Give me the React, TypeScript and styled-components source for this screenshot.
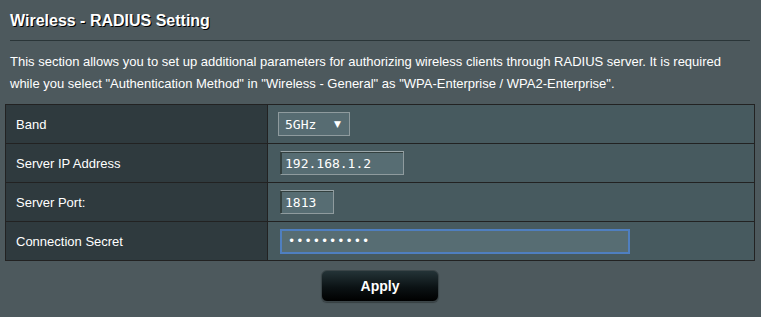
import React from 'react'
import styled, { createGlobalStyle } from 'styled-components'

const GlobalStyle = createGlobalStyle`
  body {
    margin: 0;
    background: #4d595d;
    font-family: "Liberation Sans", Arial, sans-serif;
    color: #fff;
  }
`

const Page = styled.div`
  width: 761px;
  height: 317px;
  padding: 0 6px 0 5px;
  box-sizing: border-box;
  background: #4d595d;
`

const Title = styled.h2`
  margin: 0 0 0 5px;
  padding-top: 11px;
  height: 40px;
  box-sizing: border-box;
  font-size: 16px;
  font-weight: bold;
  line-height: 20px;
  text-shadow: 1px 1px 0 #000;
`

const Divider = styled.div`
  margin: 0 0 0 5px;
  width: 740px;
  height: 1px;
  background: #2a3538;
`

const Description = styled.p`
  margin: 10px 0 0 5px;
  width: 740px;
  font-size: 13px;
  line-height: 22px;
  height: 53px;
`

const Table = styled.table`
  width: 750px;
  border-collapse: collapse;
  border: 1px solid #222;
`

const Row = styled.tr`
  height: 39px;
`

const Label = styled.th`
  width: 251px;
  background: #2f3a3e;
  border: 1px solid #222;
  text-align: left;
  font-weight: normal;
  font-size: 13px;
  padding: 0 0 0 10px;
`

const Cell = styled.td<{ $indent?: number }>`
  background: #475a5f;
  border: 1px solid #222;
  padding: 0 0 0 ${(p) => p.$indent ?? 12}px;
`

const Select = styled.div`
  width: 72px;
  height: 24px;
  box-sizing: border-box;
  border: 1px solid #8f9b9e;
  background: #576c72;
  display: flex;
  align-items: center;
  justify-content: space-between;
  padding: 0 8px 0 6px;
  font-family: "DejaVu Sans Mono", monospace;
  font-size: 13px;
`

const Arrow = styled.span`
  font-size: 9px;
  font-family: "DejaVu Sans", sans-serif;
`

const Input = styled.input<{ $width: number; $focus?: boolean }>`
  width: ${(p) => p.$width}px;
  height: ${(p) => (p.$focus ? 25 : 24)}px;
  box-sizing: border-box;
  margin: 0;
  display: block;
  background: #576d73;
  color: #fff;
  font-family: "DejaVu Sans Mono", monospace;
  font-size: 13px;
  padding: 0 0 0 4px;
  outline: none;
  border: 1px solid #8f9b9e;
  border-left-color: #33403f;
  border-top-color: #9aa6a9;
  box-shadow: inset 1px 1px 0 #33403f;
  ${(p) =>
    p.$focus &&
    `
    border: 2px solid #4f7fc0;
    box-shadow: none;
    padding-left: 6px;
    font-size: 12px;
    letter-spacing: 1px;
  `}
`

const Footer = styled.div`
  display: flex;
  justify-content: center;
  padding-top: 9px;
`

const ApplyButton = styled.button`
  width: 118px;
  height: 32px;
  border-radius: 6px;
  border: 1px solid #3b4548;
  background: linear-gradient(to bottom, #243337 0%, #0b1214 55%, #000 100%);
  color: #fff;
  font-family: "Liberation Sans", Arial, sans-serif;
  font-weight: bold;
  font-size: 14px;
  box-shadow: 0 1px 1px rgba(0, 0, 0, 0.3);
`

export default function App() {
  return (
    <Page>
      <GlobalStyle />
      <Title>Wireless - RADIUS Setting</Title>
      <Divider />
      <Description>
        This section allows you to set up additional parameters for authorizing wireless clients through RADIUS
        server. It is required while you select "Authentication Method" in "Wireless - General" as
        "WPA-Enterprise / WPA2-Enterprise".
      </Description>
      <Table>
        <tbody>
          <Row>
            <Label>Band</Label>
            <Cell $indent={10}>
              <Select>
                <span>5GHz</span>
                <Arrow>▼</Arrow>
              </Select>
            </Cell>
          </Row>
          <Row>
            <Label>Server IP Address</Label>
            <Cell>
              <Input $width={124} defaultValue="192.168.1.2" readOnly />
            </Cell>
          </Row>
          <Row>
            <Label>Server Port:</Label>
            <Cell>
              <Input $width={54} defaultValue="1813" readOnly />
            </Cell>
          </Row>
          <Row>
            <Label>Connection Secret</Label>
            <Cell>
              <Input $width={350} $focus type="password" defaultValue="xxxxxxxxxx" readOnly />
            </Cell>
          </Row>
        </tbody>
      </Table>
      <Footer>
        <ApplyButton>Apply</ApplyButton>
      </Footer>
    </Page>
  )
}
